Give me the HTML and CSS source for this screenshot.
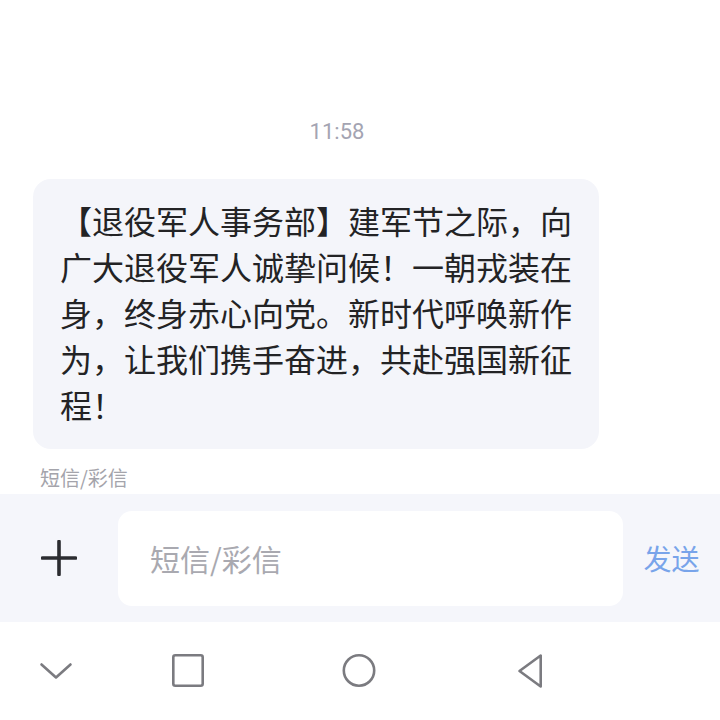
FILE: index.html
```html
<!DOCTYPE html>
<html lang="zh-CN">
<head>
  <meta charset="UTF-8">
  <meta name="viewport" content="width=device-width, initial-scale=1.0">
  <title>短信</title>
  <link rel="stylesheet" href="styles.css">
</head>
<body>
  <div class="screen">
    <!-- Conversation -->
    <section class="thread">
      <div class="time">11:58</div>
      <div class="bubble">【退役军人事务部】建军节之际，向广大退役军人诚挚问候！一朝戎装在身，终身赤心向党。新时代呼唤新作为，让我们携手奋进，共赴强国新征程！</div>
      <div class="msg-type">短信/彩信</div>
    </section>

    <!-- Compose bar -->
    <section class="compose">
      <button class="add-btn" aria-label="添加">
        <svg width="36" height="36" viewBox="0 0 36 36">
          <path d="M18 1.5v33M1.5 18h33" stroke="#2b2c30" stroke-width="3.6" stroke-linecap="round"/>
        </svg>
      </button>
      <div class="input">短信/彩信</div>
      <button class="send-btn">发送</button>
    </section>

    <!-- Navigation bar -->
    <nav class="navbar">
      <svg class="nav-icon chevron" width="40" height="40" viewBox="0 0 40 40">
        <path d="M5.5 13.5L20 26.5L34.5 13.5" fill="none" stroke="#7b7b80" stroke-width="2.6" stroke-linecap="round" stroke-linejoin="round"/>
      </svg>
      <svg class="nav-icon square" width="40" height="40" viewBox="0 0 40 40">
        <rect x="5.3" y="4.3" width="29.4" height="30.4" rx="2" fill="none" stroke="#7b7b80" stroke-width="2.6"/>
      </svg>
      <svg class="nav-icon circle" width="40" height="40" viewBox="0 0 40 40">
        <circle cx="20" cy="19.5" r="15.2" fill="none" stroke="#7b7b80" stroke-width="2.6"/>
      </svg>
      <svg class="nav-icon back" width="40" height="40" viewBox="0 0 40 40">
        <path d="M30.7 4.5V35.5L9.5 20Z" fill="none" stroke="#7b7b80" stroke-width="2.6" stroke-linejoin="round"/>
      </svg>
    </nav>
  </div>
</body>
</html>
```

FILE: styles.css
```css
/* General */
body {
  margin: 0;
  background-color: #fff;
  font-family: "Noto Sans CJK SC", "Noto Sans", sans-serif;
  color: #222;
}
.screen {
  width: 720px;
  height: 720px;
  display: flex;
  flex-direction: column;
  overflow: hidden;
}
button {
  border: none;
  background: none;
  padding: 0;
  font-family: inherit;
  cursor: pointer;
}

/* Conversation */
.thread {
  flex: 1;
  padding: 118px 0 0 33px;
}
.time {
  width: 608px;
  text-align: center;
  font-family: Roboto, "Noto Sans", sans-serif;
  font-size: 22px;
  line-height: 28px;
  color: #a4a4b2;
}
.bubble {
  width: 512px;
  margin-top: 33px;
  padding: 18px 27px 22px;
  background-color: #f4f5fa;
  border-radius: 18px;
  font-size: 32px;
  line-height: 46px;
  color: #232325;
}
.msg-type {
  margin: 16px 0 0 7px;
  font-size: 20px;
  line-height: 26px;
  color: #a4a4ab;
}

/* Compose bar */
.compose {
  height: 128px;
  display: flex;
  align-items: center;
  background-color: #f5f6fb;
}
.add-btn {
  width: 118px;
  height: 95px;
  display: flex;
  align-items: center;
  justify-content: center;
}
.input {
  width: 473px;
  height: 95px;
  padding-left: 32px;
  display: flex;
  align-items: center;
  background-color: #fff;
  border-radius: 14px;
  font-size: 30px;
  color: #a9a9b0;
}
.send-btn {
  flex: 1;
  font-size: 28px;
  color: #78a4ea;
  text-align: center;
}

/* Navigation bar */
.navbar {
  height: 98px;
  display: flex;
  align-items: center;
  padding-left: 36px;
  background-color: #fff;
}
.nav-icon {
  display: block;
}
.square {
  margin-left: 92px;
}
.circle {
  margin-left: 131px;
}
.back {
  margin-left: 131px;
}
```
